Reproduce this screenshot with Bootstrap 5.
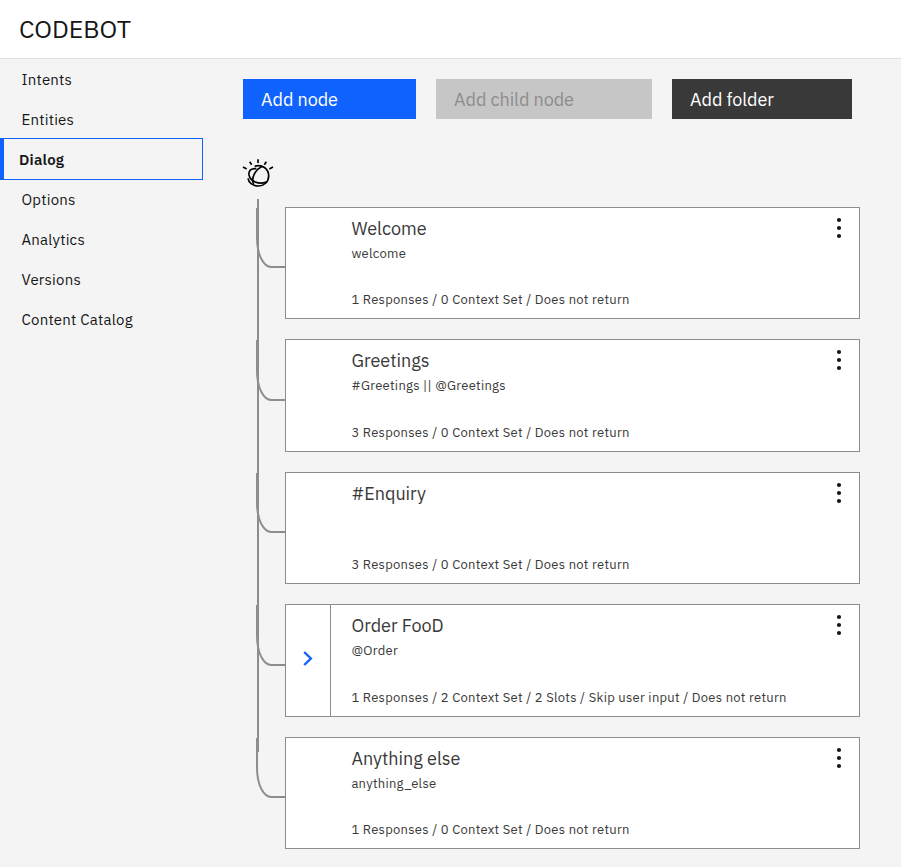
<!DOCTYPE html>
<html lang="en">
<head>
<meta charset="utf-8">
<meta name="viewport" content="width=device-width, initial-scale=1">
<title>CODEBOT</title>
<link href="https://cdn.jsdelivr.net/npm/bootstrap@5.3.0/dist/css/bootstrap.min.css" rel="stylesheet">
<style>
body{font-family:"IBM Plex Sans",Roboto,"Liberation Sans",sans-serif;background:#f4f4f4;color:#161616;height:867px;overflow:hidden}
.topbar{height:59px;padding:0 19px;border-bottom:1px solid #e0e0e0}
.topbar h1{font-size:25px;line-height:57px;font-weight:400}
.side{width:203px}
.side .nav-link{height:40px;line-height:42px;padding:0 0 0 21.5px;font-size:15px;color:#161616;letter-spacing:.22px}
.side .nav-link.active{height:42px;margin:-1px 0;padding-left:15px;border:1px solid #0f62fe;border-left-width:4px;font-weight:600}
.main{padding:20px 0 0 40px;width:657px}
.act{height:40px;padding:2px 18px 0;border:0;border-radius:0;font-size:18px;line-height:38px;text-align:left;letter-spacing:-.05px}
.act:disabled{background:#c6c6c6;color:#8d8d8d;opacity:1}
.w1{width:173px}.w2{width:216px}.w3{width:180px}
.folder,.folder:hover{background:#393939;color:#fff}
.primary,.primary:hover{background:#0f62fe;color:#fff}
.bot{display:block;margin:33px 0 0 -5px}
.tree{margin-top:15px;padding-left:42px;gap:20px}
.trunk{left:14px;top:-8px;width:2px;height:553px;background:#8d8d8d}
.node{height:112px;border:1px solid #8d8d8d;background:#fff;color:#393939;padding:8px 0 8px 65.4px}
.node.tall{height:113px}
.elbow{left:-30px;top:0;width:29px;height:60px;border:solid #8d8d8d;border-width:0 0 2px 2px;border-bottom-left-radius:15px 30px}
.tall .elbow{height:61px}
.node h2{font-size:18px;line-height:26px;margin:0;font-weight:400}
.cond,.info{font-size:13px;line-height:20px;letter-spacing:.27px}
.cond{margin-top:2px}
.more{right:16px;top:9px;fill:#161616}
.expand{left:0;top:0;bottom:0;width:45px;border-right:1px solid #8d8d8d}
.expand svg{margin:-5px 0 0 0}
</style>
</head>
<body>
<svg class="d-none"><symbol id="dots" viewBox="0 0 8 22"><circle cx="4" cy="3" r="2.1"/><circle cx="4" cy="11" r="2.1"/><circle cx="4" cy="19" r="2.1"/></symbol></svg>
<header class="topbar bg-white"><h1 class="m-0">CODEBOT</h1></header>
<div class="d-flex">
<nav class="side nav flex-column flex-nowrap flex-shrink-0">
<a class="nav-link">Intents</a>
<a class="nav-link">Entities</a>
<a class="nav-link active">Dialog</a>
<a class="nav-link">Options</a>
<a class="nav-link">Analytics</a>
<a class="nav-link">Versions</a>
<a class="nav-link">Content Catalog</a>
</nav>
<main class="main">
<div class="d-flex" style="gap:20px">
<button class="btn act w1 primary">Add node</button>
<button class="btn act w2" disabled>Add child node</button>
<button class="btn act w3 folder">Add folder</button>
</div>
<svg class="bot" width="40" height="40" viewBox="0 0 120 120" fill="none" stroke="#000" stroke-width="5" stroke-linecap="butt">
<path d="M60 22V33M35 29L41 38M85 29L79 38M15 45L26 51M105 45L94 51"/>
<path d="M50 43C72 36 92 50 92 72C92 90 78 102 61 102C45 102 32 93 30 79"/>
<path d="M55 50C40 48 31 56 33 69C37 88 62 99 85 90"/>
<path d="M73 43C52 53 38 78 47 97"/>
</svg>
<section class="tree d-flex flex-column position-relative">
<div class="trunk position-absolute"></div>
<article class="node position-relative d-flex flex-column"><i class="elbow position-absolute"></i><h2>Welcome</h2><div class="cond">welcome</div><div class="info mt-auto">1 Responses / 0 Context Set / Does not return</div><svg class="more position-absolute" width="8" height="22"><use href="#dots"/></svg></article>
<article class="node tall position-relative d-flex flex-column"><i class="elbow position-absolute"></i><h2>Greetings</h2><div class="cond">#Greetings || @Greetings</div><div class="info mt-auto">3 Responses / 0 Context Set / Does not return</div><svg class="more position-absolute" width="8" height="22"><use href="#dots"/></svg></article>
<article class="node position-relative d-flex flex-column"><i class="elbow position-absolute"></i><h2>#Enquiry</h2><div class="info mt-auto">3 Responses / 0 Context Set / Does not return</div><svg class="more position-absolute" width="8" height="22"><use href="#dots"/></svg></article>
<article class="node tall position-relative d-flex flex-column"><i class="elbow position-absolute"></i><div class="expand position-absolute d-flex align-items-center justify-content-center"><svg width="10" height="16" viewBox="0 0 10 16" fill="none" stroke="#0f62fe" stroke-width="2.4"><path d="M1.2 2L7.9 8.5L1.2 15"/></svg></div><h2>Order FooD</h2><div class="cond">@Order</div><div class="info mt-auto">1 Responses / 2 Context Set / 2 Slots / Skip user input / Does not return</div><svg class="more position-absolute" width="8" height="22"><use href="#dots"/></svg></article>
<article class="node position-relative d-flex flex-column"><i class="elbow position-absolute"></i><h2>Anything else</h2><div class="cond">anything_else</div><div class="info mt-auto">1 Responses / 0 Context Set / Does not return</div><svg class="more position-absolute" width="8" height="22"><use href="#dots"/></svg></article>
</section>
</main>
</div>
<script src="https://cdn.jsdelivr.net/npm/bootstrap@5.3.0/dist/js/bootstrap.bundle.min.js"></script>
</body>
</html>
